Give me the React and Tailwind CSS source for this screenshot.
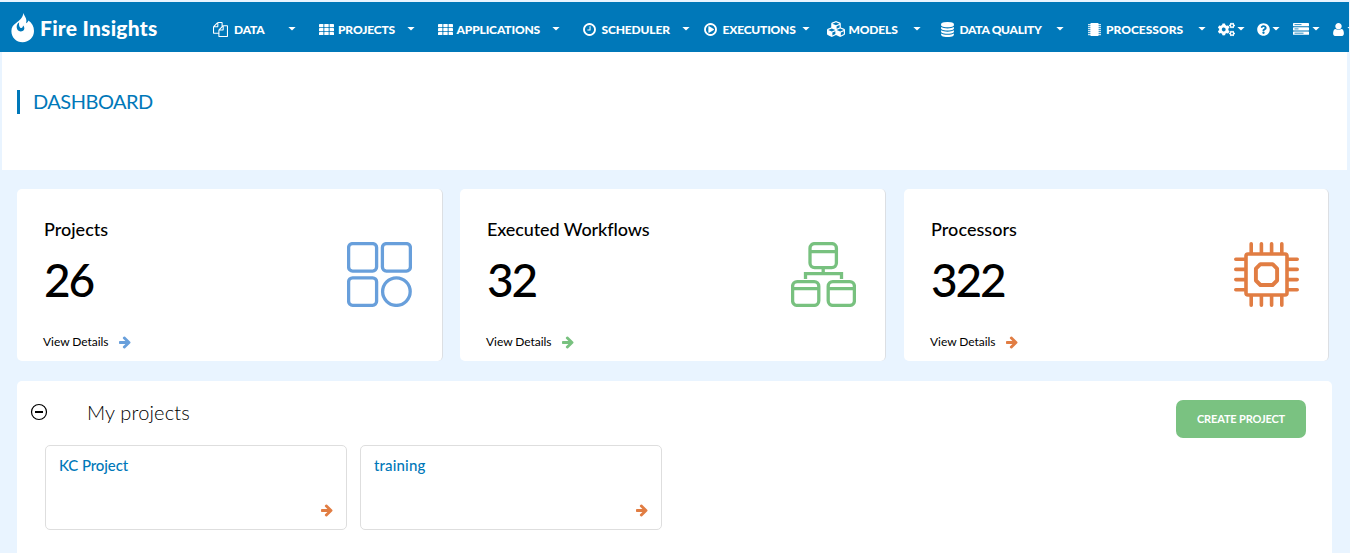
import React from "react";
import { FaCogs, FaCubes, FaQuestionCircle } from "react-icons/fa";

const RING =
  "M1440 896q0-148-73-273t-198-198-273-73-273 73-198 198-73 273 73 273 198 198 273 73 273-73 198-198 73-273zm224 0q0 209-103 385.5t-279.5 279.5-385.5 103-385.5-103-279.5-279.5-103-385.5 103-385.5 279.5-279.5 385.5-103 385.5 103 279.5 279.5 103 385.5z";

function Glyph({ d, className }) {
  return (
    <svg viewBox="0 0 1792 1792" fill="currentColor" className={className}>
      <path d={d} />
    </svg>
  );
}

const FilesIcon = () => (
  <Glyph
    className="size-[15px]"
    d="M1696 384q40 0 68 28t28 68v1216q0 40-28 68t-68 28h-960q-40 0-68-28t-28-68v-288h-544q-40 0-68-28t-28-68v-672q0-40 20-88t48-76l408-408q28-28 76-48t88-20h416q40 0 68 28t28 68v328q68-40 128-40h416zm-544 213l-299 299h299v-299zm-640-384l-299 299h299v-299zm196 647l316-316v-416h-384v416q0 40-28 68t-68 28h-416v640h512v-256q0-40 20-88t48-76zm956 804v-1152h-384v416q0 40-28 68t-68 28h-416v640h896z"
  />
);

const ClockIcon = () => (
  <Glyph
    className="-ml-px size-[15px]"
    d={"M1024 544v448q0 14-9 23t-23 9h-320q-14 0-23-9t-9-23v-64q0-14 9-23t23-9h224v-352q0-14 9-23t23-9h64q14 0 23 9t9 23z" + RING}
  />
);

const PlayIcon = () => (
  <Glyph
    className="-ml-px size-[15px]"
    d={"M1312 896q0 37-32 55l-544 320q-15 9-32 9-16 0-32-8-32-19-32-56v-640q0-37 32-56 33-18 64 1l544 320q32 18 32 55z" + RING}
  />
);

const DatabaseIcon = () => (
  <Glyph
    className="-ml-px size-[15px]"
    d="M896 768q237 0 443-43t325-127v170q0 69-103 128t-280 93.5-385 34.5-385-34.5-280-93.5-103-128v-170q119 84 325 127t443 43zm0 768q237 0 443-43t325-127v170q0 69-103 128t-280 93.5-385 34.5-385-34.5-280-93.5-103-128v-170q119 84 325 127t443 43zm0-384q237 0 443-43t325-127v170q0 69-103 128t-280 93.5-385 34.5-385-34.5-280-93.5-103-128v-170q119 84 325 127t443 43zm0-1152q208 0 385 34.5t280 93.5 103 128v128q0 69-103 128t-280 93.5-385 34.5-385-34.5-280-93.5-103-128v-128q0-69 103-128t280-93.5 385-34.5z"
  />
);

const UserIcon = () => (
  <Glyph
    className="-ml-[2px] size-[15px]"
    d="M1536 1399q0 109-62.5 187t-150.5 78h-854q-88 0-150.5-78t-62.5-187q0-85 8.5-160.5t31.5-152 58.5-131 94-89 134.5-34.5q131 128 313 128t313-128q76 0 134.5 34.5t94 89 58.5 131 31.5 152 8.5 160.5zm-256-887q0 159-112.5 271.5t-271.5 112.5-271.5-112.5-112.5-271.5 112.5-271.5 271.5-112.5 271.5 112.5 112.5 271.5z"
  />
);

const Arrow = ({ className }) => (
  <Glyph
    className={`size-[14px] ${className}`}
    d="M1600 960q0 54-37 91l-651 651q-39 37-91 37-51 0-90-37l-75-75q-38-38-38-91t38-91l293-293h-704q-52 0-84.5-37.5t-32.5-90.5v-128q0-53 32.5-90.5t84.5-37.5h704l-293-294q-38-36-38-90t38-90l75-75q38-38 90-38 53 0 91 38l651 651q37 35 37 90z"
  />
);

const GridIcon = () => (
  <svg viewBox="0 0 15 11" fill="currentColor" className="h-[11px] w-[15px]">
    {[0, 4, 8].map((y) =>
      [0, 5.3, 10.6].map((x) => <rect key={x + "-" + y} x={x} y={y} width="4.4" height="3.2" rx="0.4" />)
    )}
  </svg>
);

const ChipIcon = () => (
  <svg viewBox="0 0 13 13" fill="currentColor" className="h-[13px] w-[13px]">
    <rect x="2.4" width="8.2" height="13" rx="0.8" />
    {[1.2, 3.2, 5.2, 7.2, 9.2, 11.2].map((y) => (
      <rect key={y} y={y} width="13" height="1" />
    ))}
  </svg>
);

const ServerIcon = () => (
  <svg viewBox="0 0 16 12" className="h-[12px] w-[16px]">
    {[0, 4.3, 8.6].map((y) => (
      <rect key={y} y={y} width="16" height="3.2" rx="0.4" fill="#fff" />
    ))}
    <path d="M1.5 1.6h7M1.5 5.9h4M1.5 10.2h9" stroke="#0078b9" strokeWidth="0.8" />
  </svg>
);

const Caret = () => (
  <svg viewBox="0 0 8 4" className="h-[4px] w-[8px] shrink-0" fill="currentColor">
    <path d="M0.4 0h7.2L4 3.4z" />
  </svg>
);

const NAV = [
  { label: "DATA", icon: <FilesIcon />, item: "w-[106px]", slot: "w-[21px]", text: "w-[54px] tracking-[-0.2px]" },
  { label: "PROJECTS", icon: <GridIcon />, item: "w-[119px]", slot: "w-[19px]", text: "w-[69px] tracking-[-0.15px]" },
  { label: "APPLICATIONS", icon: <GridIcon />, item: "w-[145px]", slot: "w-[18.5px]", text: "w-[95.5px] tracking-[-0.15px]" },
  { label: "SCHEDULER", icon: <ClockIcon />, item: "w-[121px]", slot: "w-[18.5px]", text: "w-[80.5px] tracking-[-0.15px]" },
  { label: "EXECUTIONS", icon: <PlayIcon />, item: "w-[123px]", slot: "w-[18.5px]", text: "w-[79.5px] tracking-[-0.2px]" },
  { label: "MODELS", icon: <FaCubes className="size-[18px]" />, item: "w-[114px]", slot: "w-[21.5px]", text: "w-[64.5px] tracking-[-0.15px]" },
  { label: "DATA QUALITY", icon: <DatabaseIcon />, item: "w-[147px]", slot: "w-[18.5px]", text: "w-[96.5px] tracking-[-0.3px]" },
  { label: "PROCESSORS", icon: <ChipIcon />, item: "w-[130px]", slot: "w-[18px]", text: "w-[92px] tracking-[0px]" },
];

const TOOLS = [
  { name: "settings", icon: <FaCogs className="size-[17px]" />, item: "w-[39px]", slot: "w-[19px]" },
  { name: "help", icon: <FaQuestionCircle className="-ml-[0.5px] size-[13px]" />, item: "w-[36px]", slot: "w-[15px]" },
  { name: "servers", icon: <ServerIcon />, item: "w-[40px]", slot: "w-[19px]" },
  { name: "account", icon: <UserIcon />, item: "w-[22px]", slot: "w-[14px]" },
];

function Navbar() {
  return (
    <header className="mr-px flex h-[50px] items-center overflow-hidden bg-[#0078b9] text-white">
      <div className="flex w-[213px] shrink-0 items-center pl-[11px]">
        <svg viewBox="0 0 24 31" className="h-[31px] w-[24px] shrink-0" fill="currentColor">
          <path d="M12.6 1C13 4 15.4 5.4 15.4 8.6C15.4 9.6 15.2 10.4 15 11.2C16.4 10.8 17.2 9.6 17.4 8.6C21 11 23 14.8 23 19C23 25.4 18 30.2 11.6 30.2C5.2 30.2 0.4 25.4 0.4 19.2C0.4 15.6 2.2 12.8 5.4 10.8C7.6 9.2 11.6 6 12.6 1Z" />
          <path d="M8.2 10.2C5.8 11.8 5.2 14.4 6 16.8C7 19.8 11.4 20.4 13 17.8C13.8 16.2 13.2 14.6 12 13.6C12 16.2 10 16.8 8.9 15.2C8 13.8 7.8 12 8.2 10.2Z" fill="#0078b9" />
        </svg>
        <span className="ml-[5px] pt-[2px] whitespace-nowrap text-[21px] leading-[30px] font-black tracking-[0.25px]">
          Fire Insights
        </span>
      </div>
      <nav className="flex shrink-0 items-center pt-[4px]">
        {NAV.map((n) => (
          <div key={n.label} className={`flex h-5 shrink-0 items-center ${n.item}`}>
            <span className={`flex shrink-0 items-center ${n.slot}`}>{n.icon}</span>
            <span className={`shrink-0 pt-[2px] whitespace-nowrap text-[12px] leading-5 font-black ${n.text}`}>
              {n.label}
            </span>
            <Caret />
          </div>
        ))}
        {TOOLS.map((t) => (
          <div key={t.name} className={`flex h-5 shrink-0 items-center ${t.item}`}>
            <span className={`flex shrink-0 items-center ${t.slot}`}>{t.icon}</span>
            <Caret />
          </div>
        ))}
      </nav>
    </header>
  );
}

const ShapesArt = () => (
  <svg viewBox="0 0 65 65" className="size-[65px]" fill="none" stroke="currentColor" strokeWidth="3.3">
    <rect x="1.6" y="1.6" width="28" height="27.5" rx="4" />
    <rect x="35.4" y="1.6" width="28" height="27.5" rx="4" />
    <rect x="1.6" y="35.8" width="28" height="27.5" rx="4" />
    <circle cx="49.4" cy="49.6" r="13.8" />
  </svg>
);

const WorkflowArt = () => (
  <svg viewBox="0 0 65 65" className="size-[65px]" fill="none" stroke="currentColor" strokeWidth="3.3">
    <rect x="19" y="1.6" width="26.4" height="24" rx="4.6" />
    <path d="M19 9.6h26.4M1.6 46.6H28M37.2 46.6h26.2M32.2 25.6v6M14.5 37v-5.4h36V37" />
    <rect x="1.6" y="39.6" width="26.2" height="23.8" rx="4.6" />
    <rect x="37.2" y="39.6" width="26.2" height="23.8" rx="4.6" />
  </svg>
);

const ProcessorArt = () => (
  <svg viewBox="0 0 65 65" className="size-[65px]" fill="none" stroke="currentColor" strokeWidth="3.6">
    <rect x="12" y="12" width="41" height="41" rx="2" />
    <path
      strokeLinecap="round"
      d="M17.2 1.8v9M27.4 1.8v9M37.6 1.8v9M47.8 1.8v9M17.2 54v9.2M27.4 54v9.2M37.6 54v9.2M47.8 54v9.2M1.8 17.2h9M1.8 27.4h9M1.8 37.6h9M1.8 47.8h9M54 17.2h9.2M54 27.4h9.2M54 37.6h9.2M54 47.8h9.2"
    />
    <path strokeWidth="3.9" strokeLinejoin="round" d="M26.4 22.2h12.2l4.5 4.5v11.8l-4.5 4.5H26.4l-4.5-4.5V26.7z" />
  </svg>
);

const CARDS = [
  { title: "Projects", count: "26", art: <ShapesArt />, color: "text-[#689fdb]", titleCls: "tracking-[0px]", width: "w-[426px]", artW: "w-[95px]" },
  { title: "Executed Workflows", count: "32", art: <WorkflowArt />, color: "text-[#78c17f]", titleCls: "tracking-[-0.1px]", width: "w-[426px]", artW: "w-[94px]" },
  { title: "Processors", count: "322", art: <ProcessorArt />, color: "text-[#e17d43]", titleCls: "tracking-[0.05px]", width: "w-[425px]", artW: "w-[94px]" },
];

function StatCard({ title, count, art, color, titleCls, width, artW }) {
  return (
    <section
      className={`flex h-[172px] shrink-0 justify-between rounded-[5px] border-r border-[#dcdfe3] bg-white pl-[26px] text-black ${width}`}
    >
      <div className="flex flex-col pt-[28px]">
        <h2 className={`pl-px text-[18px] leading-[25px] font-medium whitespace-nowrap ${titleCls}`}>{title}</h2>
        <p className="mt-[8px] pl-px text-[46px] leading-[60px] font-medium tracking-[-2.2px]">{count}</p>
        <a className="mt-[22px] flex items-center text-[12px] leading-5 whitespace-nowrap">
          <span className="w-[75px] tracking-[-0.05px]">View Details</span>
          <Arrow className={color} />
        </a>
      </div>
      <div className={`pt-[53px] ${artW} ${color}`}>{art}</div>
    </section>
  );
}

const PROJECTS = [
  { name: "KC Project", cls: "tracking-[-0.1px]" },
  { name: "training", cls: "tracking-[0.15px]" },
];

export default function App() {
  return (
    <div className="h-[553px] w-[1350px] overflow-hidden bg-[#e9f4ff] pt-[2px] font-['Lato','Liberation_Sans',sans-serif]">
      <Navbar />
      <div className="mr-[3px] ml-[2px] flex h-[118px] items-start bg-white pt-[38px] pl-[15px]">
        <h1 className="h-6 border-l-[3px] border-[#0078b9] pl-[13px] text-[20px] leading-[23px] tracking-[-0.5px] text-[#0078b9]">
          DASHBOARD
        </h1>
      </div>
      <main className="pt-[19px] pl-[17px]">
        <div className="grid grid-cols-[443px_444px_425px]">
          {CARDS.map((c) => (
            <StatCard key={c.title} {...c} />
          ))}
        </div>
        <section className="mt-[20px] h-[190px] w-[1315px] rounded-[5px] bg-white">
          <div className="flex pt-[19px] pr-[26px] pl-[13px]">
            <svg viewBox="0 0 18 18" className="mt-[3px] size-[18px]" fill="none" stroke="#000">
              <circle cx="9" cy="9" r="7.5" strokeWidth="1.2" />
              <path d="M5 9h8" strokeWidth="2" />
            </svg>
            <h2 className="ml-[39px] text-[20px] leading-[24px] font-light tracking-[0.15px] text-black">My projects</h2>
            <button className="ml-auto h-[38px] w-[130px] rounded-[7px] bg-[#7ac281] text-[11px] font-bold tracking-[-0.15px] text-white">
              CREATE PROJECT
            </button>
          </div>
          <div className="mt-[7px] flex gap-[13px] pl-[28px]">
            {PROJECTS.map((p) => (
              <article
                key={p.name}
                className="flex h-[85px] w-[302px] flex-col justify-between rounded-[5px] border border-[#dedede] pt-[9px] pr-[12px] pb-[12px] pl-[13px]"
              >
                <h3 className={`text-[15px] leading-5 font-medium text-[#0078b9] ${p.cls}`}>{p.name}</h3>
                <Arrow className="self-end text-[#e17d43]" />
              </article>
            ))}
          </div>
        </section>
      </main>
    </div>
  );
}
